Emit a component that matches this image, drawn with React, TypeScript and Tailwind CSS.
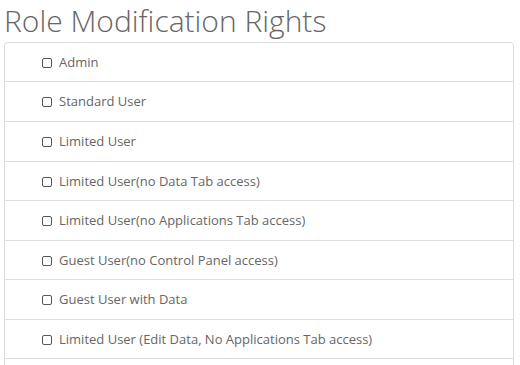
import React from 'react';

const roles = [
  { label: 'Admin', h: 'h-[38px]' },
  { label: 'Standard User', h: 'h-[40px]' },
  { label: 'Limited User', h: 'h-[40px]' },
  { label: 'Limited User(no Data Tab access)', h: 'h-[39px]' },
  { label: 'Limited User(no Applications Tab access)', h: 'h-[40px]' },
  { label: 'Guest User(no Control Panel access)', h: 'h-[39px]' },
  { label: 'Guest User with Data', h: 'h-[40px]' },
  { label: 'Limited User (Edit Data, No Applications Tab access)', h: 'h-[39px]' },
];

export default function App() {
  return (
    <div className="w-[520px] h-[365px] overflow-hidden bg-white font-['Open_Sans',sans-serif] text-[#666]">
      <h1 className="pl-[4px] pt-[1px] text-[30px] leading-[40px] font-light text-[#666]">Role Modification Rights</h1>
      <div className="mt-[1px] ml-[4px] w-[510px] border border-[#ddd] rounded-[4px]">
        {roles.map((r, i) => (
          <div
            key={r.label}
            className={`${r.h} flex items-center pl-[37px] pt-[1px] text-[13px] ${i > 0 ? 'border-t border-[#ddd]' : ''}`}
          >
            <span className="w-[10px] h-[10px] border border-[#555] rounded-[2px] mr-[7px] shrink-0" />
            <span>{r.label}</span>
          </div>
        ))}
        <div className="h-[40px] border-t border-[#ddd]" />
      </div>
    </div>
  );
}
